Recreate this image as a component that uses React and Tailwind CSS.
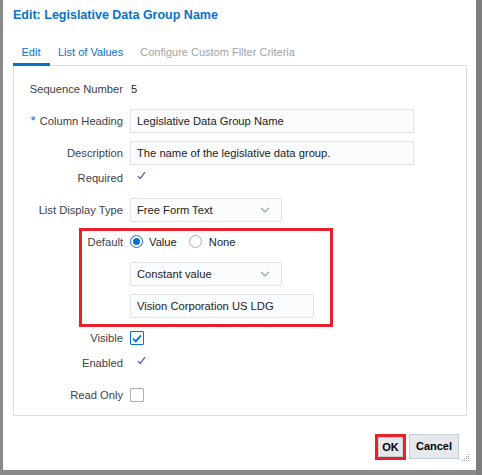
import React from "react";

const Chevron = () => (
  <svg width="10" height="6" viewBox="0 0 10 6" className="shrink-0">
    <path d="M1 1l4 4 4-4" fill="none" stroke="#9aa3ad" strokeWidth="1.2" />
  </svg>
);

const Check = () => (
  <svg width="9" height="9" viewBox="0 0 9 9">
    <path d="M1 5.2l2.3 2.3L8 1.2" fill="none" stroke="#5a6abf" strokeWidth="1.4" />
  </svg>
);

function Row({ label, h = 24, mt = 0, children, req }) {
  return (
    <div className="flex items-center" style={{ height: h, marginTop: mt }}>
      <div className="w-[110px] shrink-0 text-right pr-[1px] text-[11.2px] text-[#3e4147]">
        {req && <span className="text-[#0572ce] mr-[4px] text-[13px]">*</span>}
        {label}
      </div>
      <div className="ml-[6px] flex items-center">{children}</div>
    </div>
  );
}

const Input = ({ w, children, select }) => (
  <div
    className="h-[24px] border border-[#dfe4ea] bg-[#fbfcfd] flex items-center justify-between pl-[6px] pr-[11px] text-[11.2px] text-[#222]"
    style={{ width: w }}
  >
    <span>{children}</span>
    {select && <Chevron />}
  </div>
);

export default function App() {
  return (
    <div
      className="w-[482px] h-[475px] bg-[#8a8a8a] overflow-hidden relative"
      style={{ fontFamily: '"Liberation Sans", Arial, sans-serif' }}
    >
      <div className="absolute right-0 top-0 w-[6px] h-full bg-[#7d7d7d]" />
      <div className="relative ml-[3px] w-[473px] h-[470px] bg-white flex flex-col pl-[10px]">
        <div className="pt-[5px] text-[12.5px] font-bold text-[#0572ce] leading-[20px]">
          Edit: Legislative Data Group Name
        </div>
        <div className="flex mt-[20px] text-[11px] leading-[14px] h-[20px]">
          <div className="w-[36px] flex flex-col items-center">
            <span className="text-[#0572ce]">Edit</span>
          </div>
          <span className="ml-[9px] text-[#0572ce]">List of Values</span>
          <span className="ml-[17px] text-[#a3a3a3]">Configure Custom Filter Criteria</span>
        </div>
        <div className="relative w-[454px] h-[351px] border border-[#d6dfe6] pt-[11px]">
          <div className="absolute -top-[3px] -left-[1px] w-[37px] h-[3px] bg-[#0572ce]" />
          <Row label="Sequence Number">
            <span className="text-[11.2px] text-[#222] ml-[1px]">5</span>
          </Row>
          <Row label="Column Heading" mt={8} req>
            <Input w={284}>Legislative Data Group Name</Input>
          </Row>
          <Row label="Description" mt={8}>
            <Input w={284}>The name of the legislative data group.</Input>
          </Row>
          <Row label="Required" h={16} mt={5}>
            <div className="ml-[7px] -mt-[6px]"><Check /></div>
          </Row>
          <Row label="List Display Type" mt={12}>
            <Input w={152} select>Free Form Text</Input>
          </Row>
          <div className="ml-[65px] mt-[6px] w-[254px] h-[99px] border-[3px] border-[#e8202a] flex flex-col">
            <div className="flex items-center h-[20px] mt-[1px]">
              <div className="w-[42px] shrink-0 text-right text-[11.2px] text-[#3e4147] pr-[1px]">Default</div>
              <div className="ml-[6px] flex items-center text-[11.2px] text-[#222]">
                <span className="w-[13px] h-[13px] rounded-full border border-[#0572ce] flex items-center justify-center">
                  <span className="w-[7px] h-[7px] rounded-full bg-[#0572ce]" />
                </span>
                <span className="ml-[6px]">Value</span>
                <span className="ml-[12px] w-[13px] h-[13px] rounded-full border border-[#a9b1b9]" />
                <span className="ml-[7px]">None</span>
              </div>
            </div>
            <div className="ml-[48px] mt-[10px]">
              <Input w={152} select>Constant value</Input>
            </div>
            <div className="ml-[48px] mt-[8px]">
              <Input w={184}>Vision Corporation US LDG</Input>
            </div>
          </div>
          <Row label="Visible" h={16} mt={3}>
            <span className="w-[14px] h-[14px] border border-[#0572ce] rounded-[1px] flex items-center justify-center">
              <svg width="10" height="9" viewBox="0 0 10 9">
                <path d="M1 4.6l2.8 2.8L9 1.4" fill="none" stroke="#0572ce" strokeWidth="1.8" />
              </svg>
            </span>
          </Row>
          <Row label="Enabled" h={16} mt={9}>
            <div className="ml-[7px] -mt-[6px]"><Check /></div>
          </Row>
          <Row label="Read Only" h={16} mt={16}>
            <span className="w-[14px] h-[14px] border border-[#a9b1b9] rounded-[1px] bg-white" />
          </Row>
        </div>
        <div className="flex justify-end mt-[18px] mr-[17px]">
          <div className="border-[3px] border-[#e8202a] w-[31px] h-[26px] flex">
            <div className="flex-1 bg-[#e6e9ec] border border-[#c4ced7] flex items-center justify-center text-[11px] font-bold text-black">
              OK
            </div>
          </div>
          <div className="ml-[3px] w-[50px] h-[25px] bg-[#e6e9ec] border border-[#c4ced7] flex items-center justify-center text-[11px] font-bold text-black">
            Cancel
          </div>
        </div>
        <svg className="absolute right-[6px] bottom-[8px]" width="8" height="8" viewBox="0 0 8 8">
          <g fill="#a0a0a0">
            <rect x="6" y="0" width="1" height="1" />
            <rect x="4" y="2" width="1" height="1" />
            <rect x="6" y="2" width="1" height="1" />
            <rect x="2" y="4" width="1" height="1" />
            <rect x="4" y="4" width="1" height="1" />
            <rect x="6" y="4" width="1" height="1" />
            <rect x="0" y="6" width="1" height="1" />
            <rect x="2" y="6" width="1" height="1" />
            <rect x="4" y="6" width="1" height="1" />
            <rect x="6" y="6" width="1" height="1" />
          </g>
        </svg>
      </div>
    </div>
  );
}
